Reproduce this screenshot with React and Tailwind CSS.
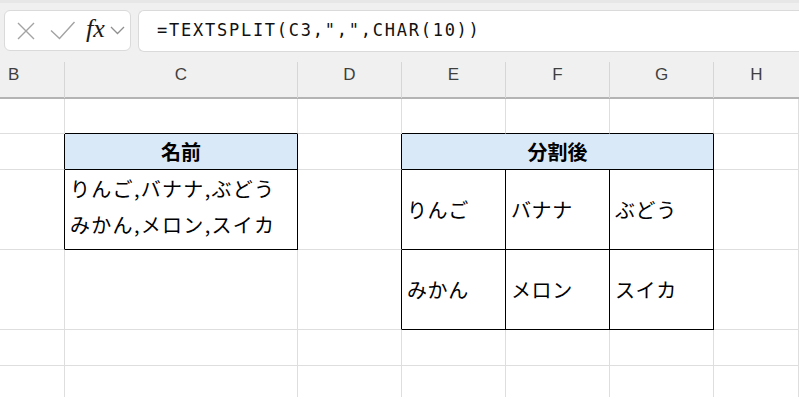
import React from "react";

const jp = { fontFamily: '"Noto Sans CJK JP", "Noto Sans", sans-serif' };

function Cell({ r = "n", b = "n", className = "", children, span }) {
  const rc = r === "k" ? "border-r-black" : "border-r-[#dedede]";
  const bc = b === "k" ? "border-b-black" : "border-b-[#dedede]";
  return (
    <div className={`border-r border-b ${rc} ${bc} ${span || ""} ${className}`}>{children}</div>
  );
}

export default function App() {
  const cols = "grid grid-cols-[65px_233px_104px_104px_104px_104px_1fr]";
  const letters = ["B", "C", "D", "E", "F", "G", "H"];
  return (
    <div className="w-[799px] h-[397px] overflow-hidden bg-white" style={{ fontFamily: '"Liberation Sans", Arial, sans-serif' }}>
      {/* formula bar */}
      <div className="h-[52px] bg-[#f0f0f0] border-t-[3px] border-t-[#e7e7e7] pt-[7px] flex items-start">
        <div className="ml-[4px] w-[127px] h-[41px] bg-white rounded-[6px] border border-[#dadada] flex items-center">
          <svg width="20" height="18" viewBox="0 0 20 18" className="ml-[11px]">
            <path d="M2 1 L18 17 M18 1 L2 17" stroke="#a3a3a3" strokeWidth="1.4" fill="none" />
          </svg>
          <svg width="26" height="19" viewBox="0 0 26 19" className="ml-[14px]">
            <path d="M1 9.5 L9.5 17.5 L24.5 1" stroke="#a3a3a3" strokeWidth="1.4" fill="none" />
          </svg>
          <span className="ml-[10px] text-[26px] leading-none text-[#1a1a1a] italic -mt-[3px]" style={{ fontFamily: '"Liberation Serif", "Times New Roman", serif' }}>fx</span>
          <svg width="15" height="9" viewBox="0 0 15 9" className="ml-[5px]">
            <path d="M1 1 L7.5 7.5 L14 1" stroke="#8f8f8f" strokeWidth="1.3" fill="none" />
          </svg>
        </div>
        <div className="ml-[7px] flex-1 h-[42px] bg-white rounded-l-[6px] border border-r-0 border-[#dadada] flex items-center pl-[18px]">
          <span className="text-[17px] text-[#111] tracking-[1.75px]" style={{ fontFamily: '"DejaVu Sans Mono", "Liberation Mono", monospace' }}>
            =TEXTSPLIT(C3,",",CHAR(10))
          </span>
        </div>
      </div>
      {/* column headers */}
      <div className={`${cols} h-[47px] bg-[#f0f0f0] border-b-2 border-b-[#b4b4b4]`}>
        {letters.map((l, i) => (
          <div key={l} className="flex flex-col">
            <div className="h-[10px]" />
            <div className={`flex-1 ${i < 6 ? "border-r border-r-[#d6d6d6]" : ""} flex items-center ${i === 0 ? "justify-start pl-[8px]" : "justify-center"} pb-[10px] text-[17px] text-[#3f3f3f]`}>
              {l}
            </div>
          </div>
        ))}
      </div>
      {/* body */}
      <div className={`${cols} grid-rows-[35px_36px_80px_80px_36px_36px]`} style={jp}>
        {/* row 1 */}
        <Cell />
        <Cell b="k" />
        <Cell />
        <Cell b="k" />
        <Cell b="k" />
        <Cell b="k" />
        <Cell />
        {/* row 2 */}
        <Cell r="k" />
        <Cell r="k" b="k" className="bg-[#dae9f8] flex items-center justify-center font-bold text-[20px] text-black">名前</Cell>
        <Cell r="k" />
        <Cell r="k" b="k" span="col-span-3" className="bg-[#dae9f8] flex items-center justify-center font-bold text-[20px] text-black">分割後</Cell>
        <Cell />
        {/* row 3 */}
        <Cell r="k" />
        <Cell r="k" b="k" className="flex flex-col justify-end pb-[6px] pl-[5px] text-[20px] leading-[36px] text-black tracking-[1.3px]">
          <div>りんご,バナナ,ぶどう</div>
          <div>みかん,メロン,スイカ</div>
        </Cell>
        <Cell r="k" />
        <Cell r="k" b="k" className="flex items-center pl-[5px] text-[20px] text-black tracking-[0.6px]">りんご</Cell>
        <Cell r="k" b="k" className="flex items-center pl-[5px] text-[20px] text-black tracking-[0.6px]">バナナ</Cell>
        <Cell r="k" b="k" className="flex items-center pl-[5px] text-[20px] text-black tracking-[0.6px]">ぶどう</Cell>
        <Cell />
        {/* row 4 */}
        <Cell />
        <Cell />
        <Cell r="k" />
        <Cell r="k" b="k" className="flex items-center pl-[5px] text-[20px] text-black tracking-[0.6px]">みかん</Cell>
        <Cell r="k" b="k" className="flex items-center pl-[5px] text-[20px] text-black tracking-[0.6px]">メロン</Cell>
        <Cell r="k" b="k" className="flex items-center pl-[5px] text-[20px] text-black tracking-[0.6px]">スイカ</Cell>
        <Cell />
        {/* row 5 */}
        {letters.map((l) => <Cell key={"r5" + l} />)}
        {/* row 6 */}
        {letters.map((l) => <Cell key={"r6" + l} />)}
      </div>
    </div>
  );
}
